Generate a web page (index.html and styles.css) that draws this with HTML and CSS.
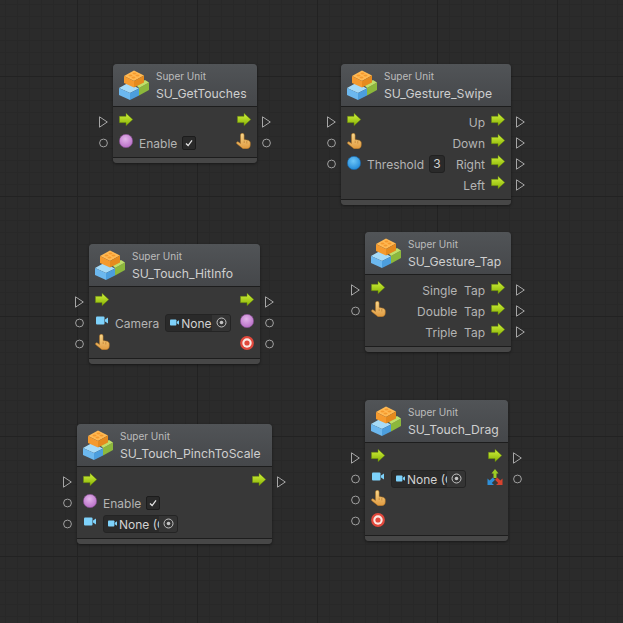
FILE: index.html
```html
<!DOCTYPE html>
<html lang="en">
<head>
	<meta charset="UTF-8">
	<title>Super Units</title>
	<link rel="stylesheet" href="styles.css">
</head>
<body>
	<svg class="defs" width="0" height="0">
		<defs>
			<linearGradient id="g-flow" x1="0" y1="0" x2="0" y2="1"><stop offset="0" stop-color="#d2f23e"/><stop offset="1" stop-color="#88b204"/></linearGradient>
			<linearGradient id="g-hand" x1="0" y1="0" x2="0" y2="1"><stop offset="0" stop-color="#f9d88c"/><stop offset="1" stop-color="#e09a40"/></linearGradient>
			<radialGradient id="g-pink" cx="0.45" cy="0.35" r="0.7"><stop offset="0" stop-color="#e3b4ea"/><stop offset="1" stop-color="#b56ac4"/></radialGradient>
			<radialGradient id="g-blue" cx="0.45" cy="0.35" r="0.7"><stop offset="0" stop-color="#6cc6f8"/><stop offset="1" stop-color="#1c84d6"/></radialGradient>
			<symbol id="port-flow" viewBox="0 0 9 12"><path d="M.5 .8 8.300 6 .5 11.200Z" fill="none" stroke="#a6a6a6"/></symbol>
			<symbol id="port-value" viewBox="0 0 9 9"><circle cx="4.500" cy="4.500" r="3.900" fill="none" stroke="#a0a0a0"/></symbol>
			<symbol id="i-flow" viewBox="0 0 14 14"><path d="M.4 3.300H7V.3L13.800 6.500 7 12.700V9.700H.4Z" fill="url(#g-flow)" stroke="#5f7f0c" stroke-width=".5"/></symbol>
			<symbol id="i-hand" viewBox="0 0 15 16"><path d="M4.500 2a1.800 1.800 0 0 1 3.600 0V6.500l3.600.7c1.500.3 2.600 1.200 2.600 2.600V12c0 2.200-1.500 3.700-3.500 3.700H8c-1.300 0-2-.6-2.800-1.500L.8 10.700c-.9-1.100.4-2.400 1.600-1.600L4.500 10.500Z" fill="url(#g-hand)" stroke="#b0701f" stroke-width=".5"/><path d="M8.200 7.500v2.500M10.800 8v2.500" stroke="#bd7d30" stroke-width=".7" fill="none"/></symbol>
			<symbol id="i-pink" viewBox="0 0 14 14"><circle cx="7" cy="7" r="6.700" fill="url(#g-pink)" stroke="#7d4a8a" stroke-width=".6"/></symbol>
			<symbol id="i-blue" viewBox="0 0 14 14"><circle cx="7" cy="7" r="6.700" fill="url(#g-blue)" stroke="#1a5f9e" stroke-width=".6"/></symbol>
			<symbol id="i-target" viewBox="0 0 14 14"><circle cx="7" cy="7" r="6.900" fill="#e2483c"/><circle cx="7" cy="7" r="4.700" fill="#fbe9e4"/><circle cx="7" cy="7" r="2.600" fill="#e2483c"/></symbol>
			<symbol id="i-camera" viewBox="0 0 12 9"><rect x="0" y=".5" width="8.500" height="8" rx="1" fill="#7ed2fb"/><path d="M9 3.600 12 1.400V7.600L9 5.400Z" fill="#7ed2fb"/></symbol>
			<symbol id="i-axes" viewBox="0 0 16 16"><path d="M8 0 11.500 4.500H9.500V9H6.500V4.500H4.500Z" fill="#9ccc24"/><path d="M.5 9.500 2.600 11.600 5.800 8.600 8 10.800 4.800 13.900 7 16H.5Z" fill="#2f8fd8"/><path d="M15.500 9.500 13.400 11.600 10.200 8.600 8 10.800 11.200 13.900 9 16H15.500Z" fill="#d8432f"/></symbol>
			<symbol id="i-picker" viewBox="0 0 11 11"><circle cx="5.500" cy="5.500" r="4.500" fill="none" stroke="#c4c4c4"/><circle cx="5.500" cy="5.500" r="1.800" fill="#c4c4c4"/></symbol>
			<symbol id="i-check" viewBox="0 0 14 14"><path d="M3.500 7.500 6 10 10.500 4" fill="none" stroke="#e4e4e4" stroke-width="1.500"/></symbol>
			<symbol id="i-unit" viewBox="0 0 30 30">
				<path d="M20 18 30 12.500V20L20 25.500Z" fill="#8cb83c"/>
				<path d="M17 15 26 10 30 12.500 20 18Z" fill="#bfe06a"/>
				<path d="M0 18 9 13 20 18.500 11 23Z" fill="#a6dbf8"/>
				<path d="M0 18 11 23V30L0 25Z" fill="#6cb8ef"/>
				<path d="M11 23 20 18.500V25.500L11 30Z" fill="#4c9edd"/>
				<path d="M5 6 15 .5 25 5.500 15 11Z" fill="#ffb953"/>
				<path d="M5 6 15 11V17.500L5 13Z" fill="#f59a2e"/>
				<path d="M15 11 25 5.500V12.500L15 17.500Z" fill="#e58a1e"/>
				<ellipse cx="11.500" cy="5.500" rx="2" ry="1.100" fill="#f59a2e"/><ellipse cx="15.500" cy="3.500" rx="2" ry="1.100" fill="#f59a2e"/>
				<ellipse cx="14.500" cy="7.500" rx="2" ry="1.100" fill="#f59a2e"/><ellipse cx="18.500" cy="5.500" rx="2" ry="1.100" fill="#f59a2e"/>
			</symbol>
		</defs>
	</svg>

	<div class="graph">
		<div class="node node-touches">
			<header class="node-head">
				<svg class="unit-icon"><use href="#i-unit"/></svg>
				<div><div class="kind">Super Unit</div><div class="title">SU_GetTouches</div></div>
			</header>
			<div class="rows">
				<div class="row">
					<svg class="port"><use href="#port-flow"/></svg>
					<div class="cell"><svg class="icon"><use href="#i-flow"/></svg></div>
					<div class="cell out"><svg class="icon"><use href="#i-flow"/></svg></div>
					<svg class="port"><use href="#port-flow"/></svg>
				</div>
				<div class="row">
					<svg class="port"><use href="#port-value"/></svg>
					<div class="cell"><svg class="icon"><use href="#i-pink"/></svg><span class="label">Enable</span><span class="check"><svg><use href="#i-check"/></svg></span></div>
					<div class="cell out"><svg class="icon-hand"><use href="#i-hand"/></svg></div>
					<svg class="port"><use href="#port-value"/></svg>
				</div>
			</div>
			<div class="node-foot"></div>
		</div>

		<div class="node node-swipe">
			<header class="node-head">
				<svg class="unit-icon"><use href="#i-unit"/></svg>
				<div><div class="kind">Super Unit</div><div class="title">SU_Gesture_Swipe</div></div>
			</header>
			<div class="rows">
				<div class="row">
					<svg class="port"><use href="#port-flow"/></svg>
					<div class="cell"><svg class="icon"><use href="#i-flow"/></svg></div>
					<div class="cell out"><span class="label">Up</span><svg class="icon"><use href="#i-flow"/></svg></div>
					<svg class="port"><use href="#port-flow"/></svg>
				</div>
				<div class="row">
					<svg class="port"><use href="#port-value"/></svg>
					<div class="cell"><svg class="icon-hand"><use href="#i-hand"/></svg></div>
					<div class="cell out"><span class="label">Down</span><svg class="icon"><use href="#i-flow"/></svg></div>
					<svg class="port"><use href="#port-flow"/></svg>
				</div>
				<div class="row">
					<svg class="port"><use href="#port-value"/></svg>
					<div class="cell"><svg class="icon icon-low"><use href="#i-blue"/></svg><span class="label">Threshold</span><span class="number">3</span></div>
					<div class="cell out"><span class="label">Right</span><svg class="icon"><use href="#i-flow"/></svg></div>
					<svg class="port"><use href="#port-flow"/></svg>
				</div>
				<div class="row">
					<span class="port"></span>
					<div class="cell out"><span class="label">Left</span><svg class="icon"><use href="#i-flow"/></svg></div>
					<svg class="port"><use href="#port-flow"/></svg>
				</div>
			</div>
			<div class="node-foot"></div>
		</div>

		<div class="node node-hitinfo">
			<header class="node-head">
				<svg class="unit-icon"><use href="#i-unit"/></svg>
				<div><div class="kind">Super Unit</div><div class="title">SU_Touch_HitInfo</div></div>
			</header>
			<div class="rows">
				<div class="row">
					<svg class="port"><use href="#port-flow"/></svg>
					<div class="cell"><svg class="icon"><use href="#i-flow"/></svg></div>
					<div class="cell out"><svg class="icon"><use href="#i-flow"/></svg></div>
					<svg class="port"><use href="#port-flow"/></svg>
				</div>
				<div class="row">
					<svg class="port"><use href="#port-value"/></svg>
					<div class="cell"><svg class="icon-camera"><use href="#i-camera"/></svg><span class="label">Camera</span>
						<span class="field field-wide"><svg class="field-cam"><use href="#i-camera"/></svg><span class="field-text">None</span><span class="picker"><svg><use href="#i-picker"/></svg></span></span></div>
					<div class="cell out"><svg class="icon"><use href="#i-pink"/></svg></div>
					<svg class="port"><use href="#port-value"/></svg>
				</div>
				<div class="row">
					<svg class="port"><use href="#port-value"/></svg>
					<div class="cell"><svg class="icon-hand"><use href="#i-hand"/></svg></div>
					<div class="cell out"><svg class="icon icon-low"><use href="#i-target"/></svg></div>
					<svg class="port"><use href="#port-value"/></svg>
				</div>
			</div>
			<div class="node-foot"></div>
		</div>

		<div class="node node-tap">
			<header class="node-head">
				<svg class="unit-icon"><use href="#i-unit"/></svg>
				<div><div class="kind">Super Unit</div><div class="title">SU_Gesture_Tap</div></div>
			</header>
			<div class="rows">
				<div class="row">
					<svg class="port"><use href="#port-flow"/></svg>
					<div class="cell"><svg class="icon"><use href="#i-flow"/></svg></div>
					<div class="cell out"><span class="label">Single  Tap</span><svg class="icon"><use href="#i-flow"/></svg></div>
					<svg class="port"><use href="#port-flow"/></svg>
				</div>
				<div class="row">
					<svg class="port"><use href="#port-value"/></svg>
					<div class="cell"><svg class="icon-hand"><use href="#i-hand"/></svg></div>
					<div class="cell out"><span class="label">Double  Tap</span><svg class="icon"><use href="#i-flow"/></svg></div>
					<svg class="port"><use href="#port-flow"/></svg>
				</div>
				<div class="row">
					<span class="port"></span>
					<div class="cell out"><span class="label">Triple  Tap</span><svg class="icon"><use href="#i-flow"/></svg></div>
					<svg class="port"><use href="#port-flow"/></svg>
				</div>
			</div>
			<div class="node-foot"></div>
		</div>

		<div class="node node-pinch">
			<header class="node-head">
				<svg class="unit-icon"><use href="#i-unit"/></svg>
				<div><div class="kind">Super Unit</div><div class="title">SU_Touch_PinchToScale</div></div>
			</header>
			<div class="rows">
				<div class="row">
					<svg class="port"><use href="#port-flow"/></svg>
					<div class="cell"><svg class="icon"><use href="#i-flow"/></svg></div>
					<div class="cell out"><svg class="icon"><use href="#i-flow"/></svg></div>
					<svg class="port"><use href="#port-flow"/></svg>
				</div>
				<div class="row">
					<svg class="port"><use href="#port-value"/></svg>
					<div class="cell"><svg class="icon"><use href="#i-pink"/></svg><span class="label">Enable</span><span class="check"><svg><use href="#i-check"/></svg></span></div>
				</div>
				<div class="row">
					<svg class="port"><use href="#port-value"/></svg>
					<div class="cell"><svg class="icon-camera"><use href="#i-camera"/></svg>
						<span class="field"><svg class="field-cam"><use href="#i-camera"/></svg><span class="field-text">None (Camera)</span><span class="picker"><svg><use href="#i-picker"/></svg></span></span></div>
				</div>
			</div>
			<div class="node-foot"></div>
		</div>

		<div class="node node-drag">
			<header class="node-head">
				<svg class="unit-icon"><use href="#i-unit"/></svg>
				<div><div class="kind">Super Unit</div><div class="title">SU_Touch_Drag</div></div>
			</header>
			<div class="rows">
				<div class="row">
					<svg class="port"><use href="#port-flow"/></svg>
					<div class="cell"><svg class="icon"><use href="#i-flow"/></svg></div>
					<div class="cell out"><svg class="icon"><use href="#i-flow"/></svg></div>
					<svg class="port"><use href="#port-flow"/></svg>
				</div>
				<div class="row">
					<svg class="port"><use href="#port-value"/></svg>
					<div class="cell"><svg class="icon-camera"><use href="#i-camera"/></svg>
						<span class="field"><svg class="field-cam"><use href="#i-camera"/></svg><span class="field-text">None (Camera)</span><span class="picker"><svg><use href="#i-picker"/></svg></span></span></div>
					<div class="cell out"><svg class="icon icon-axes"><use href="#i-axes"/></svg></div>
					<svg class="port"><use href="#port-value"/></svg>
				</div>
				<div class="row">
					<svg class="port"><use href="#port-value"/></svg>
					<div class="cell"><svg class="icon-hand"><use href="#i-hand"/></svg></div>
				</div>
				<div class="row">
					<svg class="port"><use href="#port-value"/></svg>
					<div class="cell"><svg class="icon icon-low"><use href="#i-target"/></svg></div>
				</div>
			</div>
			<div class="node-foot"></div>
		</div>
	</div>
</body>
</html>
```

FILE: styles.css
```css
html, body {
	margin: 0;
	height: 100%;
}
.defs {
	position: absolute;
}

/* canvas: minor line every 12px, major every 120px */
.graph {
	position: relative;
	width: 623px;
	height: 623px;
	overflow: hidden;
	font-family: Inter, "Noto Sans", sans-serif;
	background-color: #2b2b2b;
	background-image:
		linear-gradient(to right, #222 1px, transparent 1px),
		linear-gradient(to bottom, #222 1px, transparent 1px),
		linear-gradient(to right, #282828 1px, transparent 1px),
		linear-gradient(to bottom, #282828 1px, transparent 1px);
	background-size: 120px 120px, 120px 120px, 12px 12px, 12px 12px;
	background-position: 77px 0, 0 76px, 5px 0, 0 4px;
}

.node {
	position: absolute;
	border-radius: 4px;
	background: #383838;
	box-shadow: 0 1px 3px rgba(0, 0, 0, 0.45);
}
.node-touches { left: 113px; top: 64px; width: 144px; }
.node-swipe { left: 341px; top: 64px; width: 170px; }
.node-hitinfo { left: 89px; top: 244px; width: 171px; }
.node-tap { left: 365px; top: 232px; width: 146px; }
.node-pinch { left: 77px; top: 424px; width: 195px; }
.node-drag { left: 365px; top: 400px; width: 143px; }

.node-head {
	display: flex;
	align-items: center;
	gap: 7px;
	height: 42px;
	padding: 0 6px;
	border-bottom: 1px solid #1d1d1d;
	border-radius: 4px 4px 0 0;
	background: linear-gradient(#515457, #45474a);
}
.unit-icon {
	flex: none;
	width: 30px;
	height: 30px;
}
.kind {
	font-size: 10px;
	line-height: 14px;
	color: #bcbcbc;
}
.title {
	margin-top: 3px;
	font-size: 12.2px;
	letter-spacing: 0.03px;
	line-height: 16px;
	color: #cfcfcf;
	white-space: nowrap;
}

.rows {
	padding: 4px 0;
}
.row {
	display: flex;
	align-items: center;
	height: 21px;
	margin: 0 -14px;
}
.port {
	flex: none;
	width: 9px;
	height: 12px;
}
.cell {
	display: flex;
	align-self: stretch;
	align-items: center;
	gap: 6px;
	margin-left: 11px;
}
.cell.out {
	margin-left: auto;
	margin-right: 11px;
}
.icon {
	flex: none;
	align-self: flex-start;
	width: 14px;
	height: 14px;
	margin-top: 2px;
}
.icon-low {
	margin-top: 3px;
}
.icon-axes {
	width: 16px;
	height: 16px;
	margin-top: 1px;
	margin-right: -1px;
}
.icon-hand {
	flex: none;
	align-self: flex-start;
	width: 15px;
	height: 16px;
	margin-top: 1px;
}
.icon-camera {
	flex: none;
	align-self: flex-start;
	width: 12px;
	height: 9px;
	margin: 4px 1px 0;
}
.label {
	padding-top: 2px;
	font-size: 12px;
	line-height: 19px;
	color: #b4b4b4;
	white-space: pre;
}

.check {
	display: block;
	width: 14px;
	height: 14px;
	margin-left: -1px;
	border: 1px solid #1c1c1c;
	border-radius: 2px;
	box-sizing: border-box;
	background: #2a2a2a;
}
.check svg {
	display: block;
	width: 12px;
	height: 12px;
}
.number {
	width: 16px;
	height: 18px;
	margin-left: -1px;
	border: 1px solid #212121;
	border-radius: 3px;
	box-sizing: border-box;
	background: #2a2a2a;
	font-size: 12px;
	line-height: 16px;
	text-align: center;
	color: #d2d2d2;
}

.field {
	display: flex;
	align-items: center;
	width: 75px;
	height: 18px;
	padding-left: 4px;
	border: 1px solid #242424;
	border-radius: 3px;
	box-sizing: border-box;
	background: #2a2a2a;
}
.field-wide {
	width: 66px;
}
.field-cam {
	flex: none;
	width: 9px;
	height: 7px;
	margin-right: 2px;
}
.field-text {
	flex: 1;
	min-width: 0;
	overflow: hidden;
	padding-top: 1px;
	font-size: 12px;
	line-height: 15px;
	color: #d2d2d2;
	white-space: nowrap;
}
.picker {
	flex: none;
	display: flex;
	align-items: center;
	justify-content: center;
	width: 18px;
	height: 16px;
	border-radius: 0 2px 2px 0;
	background: #343434;
}
.picker svg {
	width: 11px;
	height: 11px;
}

.node-foot {
	height: 5px;
	border-top: 1px solid #1d1d1d;
	border-radius: 0 0 4px 4px;
	background: #474747;
}
```
